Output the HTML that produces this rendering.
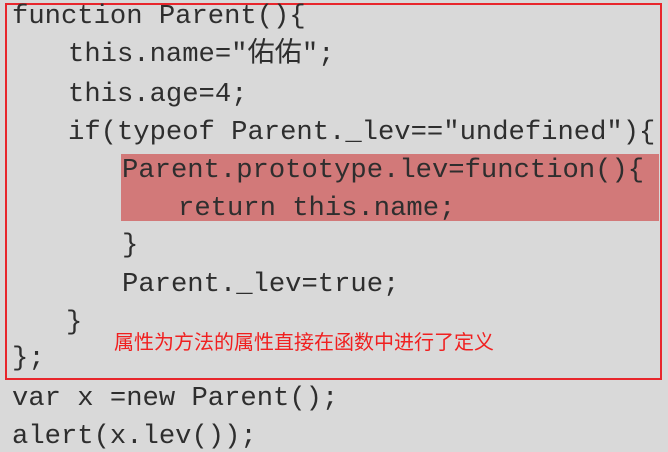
<!DOCTYPE html>
<html><head><meta charset="utf-8"><style>
html,body{margin:0;padding:0;}
body{width:668px;height:452px;background:#d9d9d9;position:relative;overflow:hidden;}
.l{position:absolute;font-family:"Liberation Mono","Noto Sans CJK SC",monospace;font-size:27.2px;color:#2e2e2e;white-space:pre;line-height:30px;}
.box{position:absolute;left:5px;top:3px;width:653px;height:373px;border:2px solid #e8262c;}
.hl{position:absolute;left:121px;top:154px;width:538px;height:67px;background:#d27979;}
.note{position:absolute;left:114px;top:328px;font-family:"Noto Sans CJK SC",sans-serif;font-size:20px;color:#f02020;line-height:26px;}
</style></head><body>
<div class="hl"></div>
<div class="box"></div>
<div class="l" style="left:12px;top:2px">function Parent(){</div>
<div class="l" style="left:68px;top:40px">this.name="佑佑";</div>
<div class="l" style="left:68px;top:80px">this.age=4;</div>
<div class="l" style="left:68px;top:118px">if(typeof Parent._lev=="undefined"){</div>
<div class="l" style="left:122px;top:156px">Parent.prototype.lev=function(){</div>
<div class="l" style="left:178px;top:194px">return this.name;</div>
<div class="l" style="left:122px;top:231px">}</div>
<div class="l" style="left:122px;top:270px">Parent._lev=true;</div>
<div class="l" style="left:66px;top:308px">}</div>
<div class="l" style="left:12px;top:344px">};</div>
<div class="note">属性为方法的属性直接在函数中进行了定义</div>
<div class="l" style="left:12px;top:384px">var x =new Parent();</div>
<div class="l" style="left:12px;top:422px">alert(x.lev());</div>
</body></html>
